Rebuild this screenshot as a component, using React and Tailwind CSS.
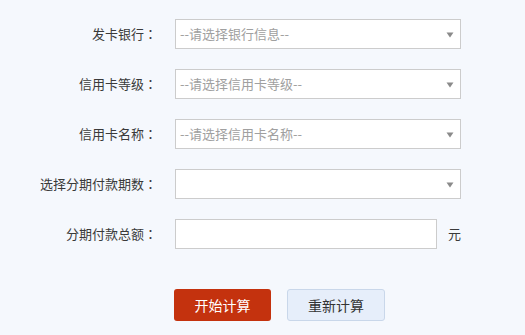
const rows = [
  { label: '发卡银行', placeholder: '--请选择银行信息--' },
  { label: '信用卡等级', placeholder: '--请选择信用卡等级--' },
  { label: '信用卡名称', placeholder: '--请选择信用卡名称--' },
  { label: '选择分期付款期数', placeholder: '' },
];

function Arrow() {
  return (
    <svg width="8" height="6" viewBox="0 0 8 6" className="absolute right-[6px] top-[12px]">
      <path d="M0.5 0.5 L7.5 0.5 L4 5.5 Z" fill="#8a8a8a" />
    </svg>
  );
}

function Label({ text }) {
  return (
    <div className="w-[157px] text-right leading-[30px]">
      {text}
      <span className="font-['Noto_Sans_CJK_JP',sans-serif]">：</span>
    </div>
  );
}

export default function App() {
  return (
    <div className="h-[335px] w-[525px] bg-[#f5f8fd] pt-[19px] font-['Noto_Sans_CJK_SC','Noto_Sans',sans-serif] text-[13px] text-[#3a3a3a]">
      <div className="flex flex-col gap-[20px]">
        {rows.map((row) => (
          <div key={row.label} className="flex items-center">
            <Label text={row.label} />
            <div className="relative ml-[18px] h-[30px] w-[286px] border border-[#cccccc] bg-white">
              <span className="pl-[4px] leading-[28px] text-[#a0a0a0]">{row.placeholder}</span>
              <Arrow />
            </div>
          </div>
        ))}
        <div className="flex items-center">
          <Label text="分期付款总额" />
          <div className="ml-[18px] h-[30px] w-[262px] border border-[#cccccc] bg-white" />
          <span className="ml-[11px]">元</span>
        </div>
      </div>
      <div className="mt-[40px] flex pl-[174px]">
        <button className="h-[32px] w-[97px] rounded-[3px] bg-[#c4320e] text-[14px] text-white">开始计算</button>
        <button className="ml-[16px] h-[32px] w-[98px] rounded-[3px] border border-[#c9d7ea] bg-[#e6eefa] text-[14px] text-[#333]">
          重新计算
        </button>
      </div>
    </div>
  );
}
